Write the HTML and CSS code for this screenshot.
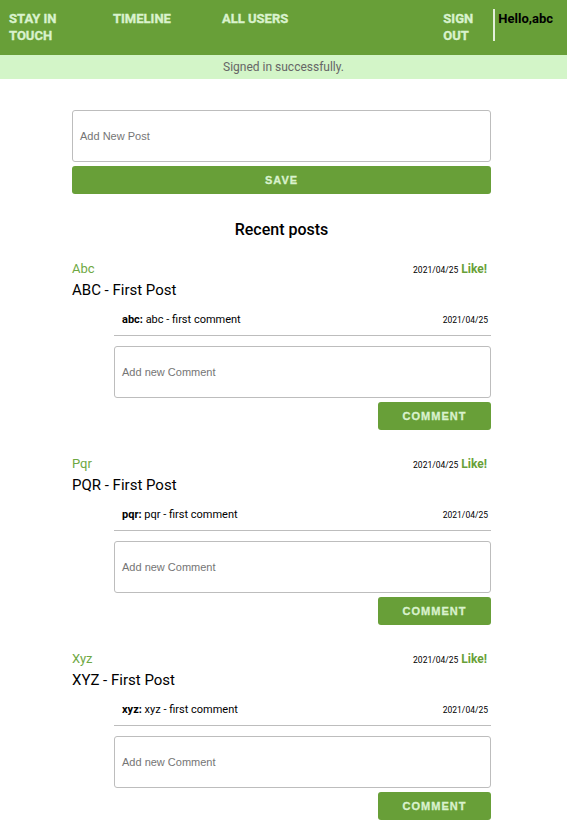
FILE: index.html
```html
<!DOCTYPE html>
<html>
<head>
<meta charset="utf-8">
<link rel="stylesheet" href="styles.css">
</head>
<body>
<header class="topbar">
  <a class="nav-link nav-brand">Stay in touch</a>
  <a class="nav-link nav-timeline">Timeline</a>
  <a class="nav-link nav-users">All users</a>
  <a class="nav-link nav-signout">Sign out</a>
  <span class="greeting">Hello,abc</span>
</header>
<div class="flash">Signed in successfully.</div>
<main class="container">
  <form class="new-post">
    <textarea class="field post-field" placeholder="Add New Post"></textarea>
    <button type="button" class="btn btn-block">Save</button>
  </form>
  <h2 class="section-title">Recent posts</h2>

  <article class="post">
    <div class="post-head">
      <span class="author">Abc</span>
      <span class="date">2021/04/25</span>
      <a class="like">Like!</a>
    </div>
    <div class="post-title">ABC - First Post</div>
    <div class="comments">
      <div class="comment">
        <span class="comment-text"><b>abc:</b> abc - first comment</span>
        <span class="date">2021/04/25</span>
      </div>
      <textarea class="field comment-field" placeholder="Add new Comment"></textarea>
      <div class="actions"><button type="button" class="btn btn-comment">Comment</button></div>
    </div>
  </article>

  <article class="post">
    <div class="post-head">
      <span class="author">Pqr</span>
      <span class="date">2021/04/25</span>
      <a class="like">Like!</a>
    </div>
    <div class="post-title">PQR - First Post</div>
    <div class="comments">
      <div class="comment">
        <span class="comment-text"><b>pqr:</b> pqr - first comment</span>
        <span class="date">2021/04/25</span>
      </div>
      <textarea class="field comment-field" placeholder="Add new Comment"></textarea>
      <div class="actions"><button type="button" class="btn btn-comment">Comment</button></div>
    </div>
  </article>

  <article class="post">
    <div class="post-head">
      <span class="author">Xyz</span>
      <span class="date">2021/04/25</span>
      <a class="like">Like!</a>
    </div>
    <div class="post-title">XYZ - First Post</div>
    <div class="comments">
      <div class="comment">
        <span class="comment-text"><b>xyz:</b> xyz - first comment</span>
        <span class="date">2021/04/25</span>
      </div>
      <textarea class="field comment-field" placeholder="Add new Comment"></textarea>
      <div class="actions"><button type="button" class="btn btn-comment">Comment</button></div>
    </div>
  </article>
</main>
</body>
</html>
```
FILE: styles.css
```css
* { box-sizing: border-box; }
html, body { margin: 0; padding: 0; }
body {
  font-family: Roboto, "Liberation Sans", Arial, sans-serif;
  color: #000;
  background: #fff;
}

.topbar {
  display: flex;
  align-items: flex-start;
  background: #689f38;
  height: 55px;
  padding: 10px 14px 0 9px;
}
.nav-link {
  font-size: 13px;
  font-weight: 700;
  line-height: 17px;
  text-transform: uppercase;
  color: #d9f2cd;
  text-decoration: none;
  -webkit-text-stroke: 0.35px #d9f2cd;
}
.nav-brand { width: 104px; padding-right: 44px; }
.nav-timeline { width: 109px; }
.nav-users { flex: 1; }
.nav-signout { width: 50px; padding-right: 6px; }
.greeting {
  border-left: 2px solid #e4f0dc;
  height: 32px;
  margin-top: -1px;
  padding: 1px 0 0 3px;
  font-size: 13px;
  font-weight: 700;
  line-height: 17px;
  color: #000;
}

.flash {
  background: #d3f5c8;
  color: #666;
  font-size: 12px;
  line-height: 24px;
  height: 24px;
  text-align: center;
}

.container {
  width: 419px;
  margin: 0 76px 0 72px;
  padding: 31px 0 20px;
}

.field {
  display: block;
  width: 100%;
  height: 52px;
  border: 1px solid #bdbdbd;
  border-radius: 3px;
  padding: 18px 7px;
  font-family: "Liberation Sans", Arial, sans-serif;
  font-size: 11px;
  line-height: 14px;
  resize: none;
  background: #fff;
}
.field::placeholder { color: #757575; }

.btn {
  display: block;
  height: 28px;
  border: none;
  border-radius: 3px;
  background: #689f38;
  color: #d9f2cd;
  font-family: "Liberation Sans", Arial, sans-serif;
  font-weight: 700;
  font-size: 11px;
  letter-spacing: 1px;
  text-transform: uppercase;
  padding: 0;
  -webkit-text-stroke: 0.3px #d9f2cd;
}
.btn-block { width: 100%; margin-top: 4px; }

.section-title {
  margin: 26px 0 21px;
  font-size: 16px;
  font-weight: 500;
  line-height: 20px;
  text-align: center;
}

.post { margin-bottom: 26px; }
.post-head {
  display: flex;
  align-items: baseline;
  height: 16px;
  line-height: 16px;
  padding-right: 4px;
}
.author {
  flex: 1;
  font-size: 13px;
  color: #6ea843;
}
.date {
  font-size: 8.5px;
  color: #000;
}
.like {
  margin-left: 3px;
  font-size: 12px;
  font-weight: 700;
  color: #689f38;
}
.post-title {
  margin-top: 4px;
  font-size: 15px;
  line-height: 18px;
}

.comments { margin-left: 42px; }
.comment {
  display: flex;
  align-items: baseline;
  justify-content: space-between;
  margin-top: 5px;
  padding: 8px 3px 7px 8px;
  line-height: 16px;
  border-bottom: 1px solid #bdbdbd;
}
.comment-text { font-size: 11px; }
.comment-text b { font-weight: 700; }
.comment-field { margin-top: 10px; }
.actions {
  display: flex;
  justify-content: flex-end;
  margin-top: 4px;
}
.btn-comment { width: 113px; }
```
